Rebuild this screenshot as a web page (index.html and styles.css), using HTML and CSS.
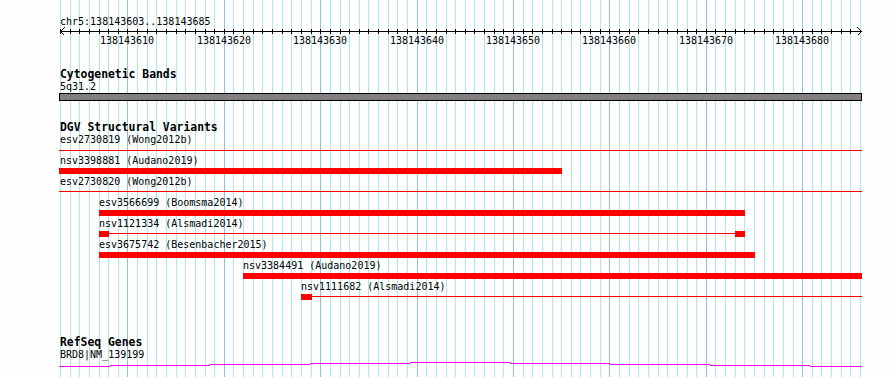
FILE: index.html
```html
<!DOCTYPE html>
<html lang="en">

<head>
    <meta charset="UTF-8">
    <title>chr5:138143603..138143685</title>
    <link rel="stylesheet" href="styles.css">
</head>

<body>
    <div class="browser">
        <svg id="panel" class="panel" width="890" height="377" viewBox="0 0 890 377">
            <!-- grid + ruler ticks are added by the script -->
            <g id="grid"></g>

            <!-- Ruler -->
            <text class="lbl" x="60" y="25">chr5:138143603..138143685</text>
            <g id="ruler" class="line">
                <rect x="60" y="31" width="802" height="1" />
                <path class="arrow" d="M64.5 27.5 L60.5 31.5 L64.5 35.5 M857.5 27.5 L861.5 31.5 L857.5 35.5" />
            </g>
            <g id="tickLabels"></g>

            <!-- Cytogenetic Bands -->
            <text class="title" x="60" y="78">Cytogenetic Bands</text>
            <text class="lbl" x="60" y="90">5q31.2</text>
            <rect class="band" x="59.5" y="93.5" width="802" height="7" />

            <!-- DGV Structural Variants -->
            <text class="title" x="60" y="131">DGV Structural Variants</text>

            <text class="lbl" x="60" y="143">esv2730819 (Wong2012b)</text>
            <rect class="sv" x="59" y="150" width="803" height="1" />

            <text class="lbl" x="60" y="164">nsv3398881 (Audano2019)</text>
            <rect class="sv" x="59" y="168" width="503" height="6" />

            <text class="lbl" x="60" y="185">esv2730820 (Wong2012b)</text>
            <rect class="sv" x="59" y="191" width="803" height="1" />

            <text class="lbl" x="99" y="206">esv3566699 (Boomsma2014)</text>
            <rect class="sv" x="99" y="210" width="646" height="6" />

            <text class="lbl" x="99" y="227">nsv1121334 (Alsmadi2014)</text>
            <rect class="sv" x="99" y="233" width="646" height="1" />
            <rect class="sv" x="99" y="231" width="10" height="6" />
            <rect class="sv" x="735" y="231" width="10" height="6" />

            <text class="lbl" x="99" y="248">esv3675742 (Besenbacher2015)</text>
            <rect class="sv" x="99" y="252" width="656" height="6" />

            <text class="lbl" x="243" y="269">nsv3384491 (Audano2019)</text>
            <rect class="sv" x="243" y="273" width="619" height="6" />

            <text class="lbl" x="301" y="290">nsv1111682 (Alsmadi2014)</text>
            <rect class="sv" x="301" y="296" width="561" height="1" />
            <rect class="sv" x="301" y="294" width="11" height="6" />

            <!-- RefSeq Genes -->
            <text class="title" x="60" y="346">RefSeq Genes</text>
            <text class="lbl" x="60" y="358">BRD8|NM_139199</text>
            <g class="gene">
                <rect x="59" y="366" width="51" height="1" />
                <rect x="110" y="365" width="100" height="1" />
                <rect x="210" y="364" width="100" height="1" />
                <rect x="310" y="363" width="100" height="1" />
                <rect x="410" y="362" width="100" height="1" />
                <rect x="510" y="363" width="100" height="1" />
                <rect x="610" y="364" width="100" height="1" />
                <rect x="710" y="365" width="100" height="1" />
                <rect x="810" y="366" width="52" height="1" />
            </g>
        </svg>
    </div>

    <script>
        const NS = 'http://www.w3.org/2000/svg',
            start = 138143603,
            end = 138143685,
            left = 60,
            scale = 800 / (end - start + 1);

        const grid = document.getElementById('grid'),
            ruler = document.getElementById('ruler'),
            tickLabels = document.getElementById('tickLabels');

        function el(name, attrs) {
            const node = document.createElementNS(NS, name);
            for (const k in attrs) node.setAttribute(k, attrs[k]);
            return node;
        }

        for (let b = start; b <= end + 1; b++) {
            const x = Math.round(left + (b - start) * scale);
            const major = b % 10 === 0;
            // vertical grid line, full height
            grid.appendChild(el('rect', {
                x: x, y: 0, width: 1, height: 377,
                class: major ? 'grid-major' : 'grid-minor'
            }));
            if (b > end) continue;
            // tick on the ruler
            ruler.appendChild(el('rect', { x: x, y: 29, width: 1, height: 5 }));
            if (major) {
                const t = el('text', { x: x, y: 44, class: 'lbl tick' });
                t.textContent = b;
                tickLabels.appendChild(t);
            }
        }
    </script>
</body>

</html>
```

FILE: styles.css
```css
* {
    margin: 0;
    padding: 0;
}

body {
    background-color: #fdfefd;
    font-family: 'DejaVu Sans Mono', 'Liberation Mono', monospace;
}

.browser {
    width: 890px;
    height: 377px;
}

.panel {
    display: block;
    shape-rendering: crispEdges;
}

.grid-minor {
    fill: #abe7ec;
}

.grid-major {
    fill: #85c6e9;
}

.lbl {
    font-family: 'DejaVu Sans Mono', 'Liberation Mono', monospace;
    font-size: 10px;
    fill: #000;
}

.tick {
    text-anchor: middle;
}

.title {
    font-family: 'DejaVu Sans Mono', 'Liberation Mono', monospace;
    font-size: 11.4px;
    font-weight: bold;
    fill: #000;
}

.line rect {
    fill: #000;
}

.arrow {
    fill: none;
    stroke: #000;
    stroke-width: 1;
}

.band {
    fill: #808080;
    stroke: #000;
    stroke-width: 1;
}

.sv {
    fill: #ff0000;
}

.gene rect {
    fill: #ff00ff;
}
```
